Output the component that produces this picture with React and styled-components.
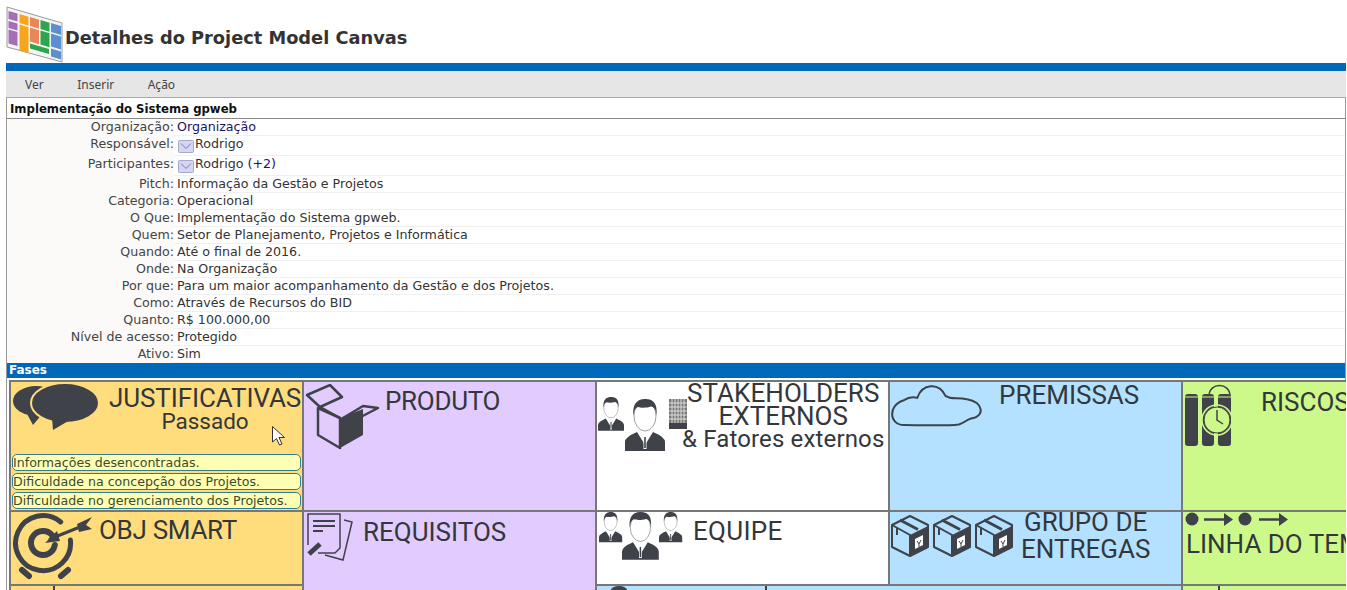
import React from 'react'
import styled, { createGlobalStyle } from 'styled-components'

const DARK = '#3f4349'

const GlobalStyle = createGlobalStyle`
  html, body {
    margin: 0;
    padding: 0;
    height: 590px;
    overflow: hidden;
    background: #fff;
    font-family: "DejaVu Sans", Verdana, sans-serif;
  }
`

const Page = styled.div`
  position: relative;
  width: 1340px;
  height: 590px;
  margin-left: 6px;
  overflow: hidden;
`

const Header = styled.header`
  display: flex;
  align-items: flex-start;
  height: 63px;
`

const PageTitle = styled.h1`
  margin: 26px 0 0 1px;
  font-size: 17.8px;
  line-height: 23px;
  font-weight: bold;
  color: #333;
`

const BlueBar = styled.div`
  height: 8px;
  background: #0068b8;
`

const Menu = styled.nav`
  display: flex;
  gap: 33.5px;
  height: 26px;
  padding-left: 19px;
  align-items: center;
  background: #e6e6e6;
  border-bottom: 1px solid #aaa;
  font-family: "Noto Sans", sans-serif;
  font-size: 12px;
  color: #444;
`

const Panel = styled.section`
  border-left: 1px solid #999;
  border-right: 1px solid #999;
  height: 493px;
  background: #fbfaf8;
`

const ProjectName = styled.div`
  height: 20px;
  padding-left: 3px;
  background: #fff;
  border-bottom: 1px solid #888;
  font-size: 11.7px;
  line-height: 22px;
  font-weight: bold;
  color: #111;
`

const Row = styled.div`
  display: grid;
  grid-template-columns: 167px 1fr;
  height: ${p => (p.$tall ? 20 : 17)}px;
  font-size: 12.65px;
  line-height: 16px;
  color: #333;
`

const Label = styled.div`
  text-align: right;
  color: #444;
`

const Value = styled.div`
  display: flex;
  align-items: flex-start;
  padding-left: 3px;
  background: #fff;
  border-bottom: 1px solid #f0f0f0;
  color: ${p => (p.$link ? '#1a1266' : '#333')};
`

const Muted = styled.span`
  color: #1a1266;
  margin-left: 4px;
`

const SectionBar = styled.div`
  height: 15px;
  padding-left: 2px;
  background: #0068b8;
  font-size: 12px;
  line-height: 15px;
  font-weight: bold;
  color: #fff;
`

const CanvasGrid = styled.div`
  display: grid;
  grid-template-columns: repeat(5, 291px);
  grid-template-rows: 128px 72px 60px;
  gap: 2px;
  width: max-content;
  margin: 2px 0 0 2px;
  padding: 2px;
  background: #777;
`

const Cell = styled.div`
  display: flex;
  flex-direction: column;
  overflow: hidden;
  background: ${p => p.$bg};
  grid-column: ${p => p.$col};
  grid-row: ${p => p.$row};
`

const Head = styled.div`
  display: flex;
  align-items: flex-start;
  padding: ${p => p.$top || 0}px 0 0 ${p => p.$left || 0}px;
`

const Icon = styled.svg`
  display: block;
  flex: none;
`

const Titles = styled.div`
  margin: ${p => p.$mt || 0}px 0 0 ${p => p.$ml || 0}px;
  text-align: ${p => p.$align || 'center'};
  white-space: nowrap;
  font-family: Roboto, "Noto Sans", sans-serif;
  color: #33373c;
`

const Title = styled.div`
  font-size: ${p => p.$size || 26}px;
  line-height: ${p => p.$lh || 26}px;
  letter-spacing: ${p => p.$ls || 0}px;
`

const Notes = styled.div`
  display: flex;
  flex-direction: column;
  gap: 2px;
  margin-top: auto;
  padding: 0 1px 1px;
`

const Note = styled.div`
  height: 15px;
  border: 1px solid #2f7f8c;
  border-radius: 5px;
  background: #ffffb4;
  font-size: 12.6px;
  line-height: 15px;
  color: #3c4a30;
  white-space: nowrap;
`

const Peek = styled.div`
  width: ${p => p.$w || 2}px;
  height: 8px;
  margin-left: ${p => p.$at}px;
  background: ${DARK};
  border-radius: ${p => (p.$w ? '50% 50% 0 0' : 0)};
`

const PeekRow = styled.div`
  display: flex;
  align-items: flex-start;
`

const Pointer = styled.svg`
  position: absolute;
  left: 265px;
  top: 425px;
`

const Logo = () => (
  <Icon width="58" height="58" viewBox="6 6 58 58" style={{ marginTop: 6 }}>
    <path d="M7 7 L62 23 V62 L7 47 Z" fill="#f4f4f4" stroke="#9a9aa2" strokeWidth="1" />
    <g transform="skewY(16)">
      <rect x="8.5" y="8.5" width="9" height="8" fill="#a56fb5" />
      <rect x="8.5" y="18.5" width="9" height="7" fill="#a56fb5" />
      <rect x="8.5" y="27" width="9" height="14" fill="#a56fb5" />
      <rect x="19.5" y="8.5" width="9" height="9" fill="#f7a51b" />
      <rect x="19.5" y="19" width="9" height="26" fill="#f7a51b" />
      <rect x="30" y="8.5" width="9" height="9" fill="#e8865a" />
      <rect x="30" y="19" width="9" height="14" fill="#e8865a" />
      <rect x="30" y="35" width="19" height="5" fill="#2da44e" />
      <rect x="40.5" y="8.5" width="9" height="9" fill="#2da44e" />
      <rect x="40.5" y="19" width="9" height="14" fill="#2da44e" />
      <rect x="51" y="8.5" width="10" height="9" fill="#5b8fd0" />
      <rect x="51" y="19" width="10" height="13" fill="#5b8fd0" />
      <rect x="51" y="34" width="10" height="8" fill="#5b8fd0" />
    </g>
  </Icon>
)

const Chevron = () => (
  <Icon width="16" height="13" viewBox="0 0 16 13" style={{ margin: '4px 1px 0 1px' }}>
    <rect x="0.5" y="0.5" width="15" height="12" rx="1" fill="#d5d7f2" stroke="#a5a7cc" />
    <path d="M3 3.5 L8 8.5 L13 3.5" fill="none" stroke="#777aa8" strokeWidth="1" />
  </Icon>
)

const Bubbles = ({ bg }) => (
  <Icon width="87" height="47" viewBox="13 383 87 47" style={{ marginTop: 1, marginLeft: 2 }}>
    <ellipse cx="36" cy="401" rx="23" ry="15" fill={DARK} />
    <path d="M26 412 L33 425 L44 412 Z" fill={DARK} />
    <ellipse cx="65" cy="403" rx="34" ry="20" fill={DARK} stroke={bg} strokeWidth="2" />
    <path d="M52 418 L53 430 L70 420 Z" fill={DARK} />
  </Icon>
)

const Target = () => (
  <Icon width="84" height="68" viewBox="11 512 84 68">
    <g fill="none" stroke={DARK} strokeLinecap="round">
      <path d="M60.7 522 A27.5 27.5 0 1 0 70.4 540" strokeWidth="5" />
      <path d="M52.2 535.3 A12 12 0 1 0 54.8 545" strokeWidth="6" />
      <path d="M22 570 L29 576 M68 570 L61 576" strokeWidth="6" />
      <path d="M50 539 L80 527" strokeWidth="3" />
    </g>
    <path d="M45 543 L57 531 L60 541 Z" fill={DARK} />
    <path d="M77 524 L92 517 L86 525 L92 529 L79 532 Z" fill={DARK} />
  </Icon>
)

const OpenBox = () => (
  <Icon width="75" height="66" viewBox="305 384 75 66">
    <g fill="none" stroke={DARK} strokeWidth="2.5" strokeLinejoin="round">
      <path d="M307 395 L330 385 L342 397 L320 407 Z" />
      <path d="M318 408 V435 L340 448 V418 Z" />
      <path d="M320 407 L340 418" />
      <path d="M343 418 L363 406 L378 408 L355 420" />
    </g>
    <path d="M340 418 L363 409 V435 L340 448 Z" fill={DARK} />
  </Icon>
)

const Papers = () => (
  <Icon width="50" height="50" viewBox="305 512 50 50">
    <g fill="none" stroke={DARK} strokeWidth="1.5">
      <path d="M308 545 V514 H340 V548 L335 553 H318" />
      <path d="M344 520 L352 522 L343 560 L325 555" />
      <path d="M313 521 H335 M313 526 H335" strokeWidth="2" />
      <path d="M313 531 H323" strokeWidth="2" />
    </g>
    <path d="M309 554 L320 544" stroke={DARK} strokeWidth="5" />
  </Icon>
)

// busto usado nos grupos de pessoas
const Person = ({ x, y, s }) => (
  <g transform={`translate(${x} ${y}) scale(${s})`}>
    <ellipse cx="20" cy="17" rx="11" ry="15" fill="#fff" stroke="#888" strokeWidth="0.8" />
    <path d="M8.5 17 C7 3 14 0 20 0 C27 0 33 3 31.5 17 C31 10 29 8 26 7.5 C22 9 16 9 13 8 C10 9 9 12 8.5 17 Z" fill={DARK} />
    <path d="M0 52 V43 Q0 38 12 33 L20 46 L28 33 Q40 38 40 43 V52 Z" fill={DARK} />
    <path d="M20 37 V50" stroke="#fff" strokeWidth="3" />
    <path d="M20 38 V49" stroke={DARK} strokeWidth="1.6" />
  </g>
)

const Stakeholders = () => (
  <Icon width="92" height="60" viewBox="597 395 92 60">
    <Person x={598} y={397} s={0.65} />
    <Person x={625} y={399} s={1} />
    <rect x="669" y="399" width="18" height="30" fill="#777" />
    <path d="M672 399 V423 M675 399 V423 M678 399 V423 M681 399 V423 M684 399 V423 M669 403 H687 M669 407 H687 M669 411 H687 M669 415 H687 M669 419 H687" stroke="#ddd" strokeWidth="1" />
    <rect x="669" y="423" width="18" height="6" fill={DARK} />
  </Icon>
)

const Team = () => (
  <Icon width="86" height="52" viewBox="598 512 86 52">
    <Person x={599} y={512} s={0.58} />
    <Person x={622} y={512} s={0.92} />
    <Person x={659} y={512} s={0.58} />
  </Icon>
)

const Cloud = () => (
  <Icon width="97" height="47" viewBox="18 21 292 140">
    <path
      d="M60 150 C15 150 10 90 60 75 C75 65 90 65 100 68 C115 25 165 20 185 62 C205 75 215 65 250 72 C300 80 305 125 262 130 C245 135 245 142 225 148 C190 153 100 150 60 150 Z"
      fill="none"
      stroke={DARK}
      strokeWidth="6"
    />
  </Icon>
)

const ParcelShape = () => (
  <>
    <path d="M19 1 L37 10 V32 L19 41 L1 32 V10 Z" fill="none" stroke={DARK} strokeWidth="2" strokeLinejoin="round" />
    <path d="M19 20 L37 11 V32 L19 41 Z" fill={DARK} />
    <path d="M1 10 L19 20 V41" fill="none" stroke={DARK} strokeWidth="2" />
    <path d="M9 5 L27 14.5" stroke={DARK} strokeWidth="3" />
    <path d="M6 13 V20" stroke={DARK} strokeWidth="2" />
    <path d="M24 24 L32 20 V30 L24 34 Z" fill="#fff" />
    <path d="M26 26 L28 29 L30 25 M28 29 V32" fill="none" stroke={DARK} strokeWidth="1" />
  </>
)

const Parcels = () => (
  <Icon width="122" height="42" viewBox="0 0 122 42">
    {[0, 42, 84].map(x => (
      <g key={x} transform={`translate(${x} 0)`}>
        <ParcelShape />
      </g>
    ))}
  </Icon>
)

const Bomb = ({ bg }) => (
  <Icon width="50" height="64" viewBox="1184 384 50 64">
    <path d="M1209 396 C1209 382 1230 382 1230 396" fill="none" stroke={DARK} strokeWidth="1.5" />
    <rect x="1185" y="394" width="13" height="52" rx="3" fill={DARK} />
    <rect x="1202" y="394" width="12" height="52" rx="3" fill={DARK} />
    <rect x="1218" y="394" width="13" height="52" rx="3" fill={DARK} />
    <path d="M1185 397 H1198 M1202 397 H1214 M1218 397 H1231" stroke={bg} strokeWidth="1" />
    <circle cx="1217" cy="420" r="13" fill={bg} stroke={DARK} strokeWidth="1" />
    <circle cx="1217" cy="420" r="15" fill="none" stroke={bg} strokeWidth="1.5" />
    <path d="M1217 410 V420 L1223 424" fill="none" stroke={DARK} strokeWidth="1.5" />
  </Icon>
)

const Timeline = () => (
  <Icon width="106" height="16" viewBox="1184 512 106 16">
    <circle cx="1192" cy="519" r="6.5" fill={DARK} />
    <circle cx="1245" cy="519" r="6.5" fill={DARK} />
    <path d="M1204 519.5 H1226 M1259 519.5 H1281" stroke={DARK} strokeWidth="2.5" />
    <path d="M1224 513 L1233 519.5 L1224 526 Z M1279 513 L1288 519.5 L1279 526 Z" fill={DARK} />
  </Icon>
)

const fields = [
  { label: 'Organização', value: 'Organização', link: true },
  { label: 'Responsável', value: 'Rodrigo', person: true },
  { label: 'Participantes', value: 'Rodrigo', more: '(+2)', person: true },
  { label: 'Pitch', value: 'Informação da Gestão e Projetos' },
  { label: 'Categoria', value: 'Operacional' },
  { label: 'O Que', value: 'Implementação do Sistema gpweb.' },
  { label: 'Quem', value: 'Setor de Planejamento, Projetos e Informática' },
  { label: 'Quando', value: 'Até o final de 2016.' },
  { label: 'Onde', value: 'Na Organização' },
  { label: 'Por que', value: 'Para um maior acompanhamento da Gestão e dos Projetos.' },
  { label: 'Como', value: 'Através de Recursos do BID' },
  { label: 'Quanto', value: 'R$ 100.000,00' },
  { label: 'Nível de acesso', value: 'Protegido' },
  { label: 'Ativo', value: 'Sim' },
]

const YELLOW = '#ffdd7d'
const PURPLE = '#e2ccff'
const BLUE = '#b3e1ff'
const GREEN = '#cdf98a'

const App = () => {
  return (
    <Page>
      <GlobalStyle />
      <Header>
        <Logo />
        <PageTitle>Detalhes do Project Model Canvas</PageTitle>
      </Header>
      <BlueBar />
      <Menu>
        <span>Ver</span>
        <span>Inserir</span>
        <span>Ação</span>
      </Menu>
      <Panel>
        <ProjectName>Implementação do Sistema gpweb</ProjectName>
        {fields.map(f => (
          <Row key={f.label} $tall={f.person}>
            <Label>{f.label}:</Label>
            <Value $link={f.link}>
              {f.person && <Chevron />}
              {f.value}
              {f.more && <Muted>{f.more}</Muted>}
            </Value>
          </Row>
        ))}
        <SectionBar>Fases</SectionBar>
        <CanvasGrid>
          <Cell $bg={YELLOW} $col="1" $row="1">
            <Head>
              <Bubbles bg={YELLOW} />
              <Titles $ml={9} $mt={3}>
                <Title $ls={-0.1}>JUSTIFICATIVAS</Title>
                <Title $size={22.5} $lh={20}>Passado</Title>
              </Titles>
            </Head>
            <Notes>
              <Note>Informações desencontradas.</Note>
              <Note>Dificuldade na concepção dos Projetos.</Note>
              <Note>Dificuldade no gerenciamento dos Projetos.</Note>
            </Notes>
          </Cell>
          <Cell $bg={PURPLE} $col="2" $row="1">
            <Head $left={1} $top={2}>
              <OpenBox />
              <Titles $ml={5} $mt={4}>
                <Title $ls={-0.3}>PRODUTO</Title>
              </Titles>
            </Head>
          </Cell>
          <Cell $bg="#fff" $col="3" $row="1">
            <Head $top={13}>
              <Stakeholders />
              <Titles $ml={-7} $mt={-13}>
                <Title $lh={23} $ls={0.05}>STAKEHOLDERS</Title>
                <Title $lh={23}>EXTERNOS</Title>
                <Title $size={24} $lh={23} $ls={0.15}>&amp; Fatores externos</Title>
              </Titles>
            </Head>
          </Cell>
          <Cell $bg={BLUE} $col="4" $row="1">
            <Head>
              <Cloud />
              <Titles $ml={12}>
                <Title>PREMISSAS</Title>
              </Titles>
            </Head>
          </Cell>
          <Cell $bg={GREEN} $col="5" $row="1">
            <Head $left={1} $top={2}>
              <Bomb bg={GREEN} />
              <Titles $ml={27} $mt={5}>
                <Title>RISCOS</Title>
              </Titles>
            </Head>
          </Cell>

          <Cell $bg={YELLOW} $col="1" $row="2">
            <Head>
              <Target />
              <Titles $ml={4} $mt={5}>
                <Title $ls={-0.3}>OBJ SMART</Title>
              </Titles>
            </Head>
          </Cell>
          <Cell $bg={PURPLE} $col="2" $row="2 / 4">
            <Head $left={1}>
              <Papers />
              <Titles $ml={8} $mt={7}>
                <Title>REQUISITOS</Title>
              </Titles>
            </Head>
          </Cell>
          <Cell $bg="#fff" $col="3" $row="2">
            <Head $left={1}>
              <Team />
              <Titles $ml={9} $mt={6}>
                <Title $ls={0.3}>EQUIPE</Title>
              </Titles>
            </Head>
          </Cell>
          <Cell $bg={BLUE} $col="4" $row="2">
            <Head $left={1} $top={3}>
              <Parcels />
              <Titles $ml={8} $mt={-6}>
                <Title $lh={27}>GRUPO DE</Title>
                <Title $lh={27}>ENTREGAS</Title>
              </Titles>
            </Head>
          </Cell>
          <Cell $bg={GREEN} $col="5" $row="2">
            <Head $left={1}>
              <Timeline />
            </Head>
            <Titles $ml={3} $mt={3} $align="left">
              <Title>LINHA DO TEMPO</Title>
            </Titles>
          </Cell>

          <Cell $bg={YELLOW} $col="1" $row="3">
            <PeekRow>
              <Peek $at={42} />
            </PeekRow>
          </Cell>
          <Cell $bg={BLUE} $col="3 / 5" $row="3">
            <PeekRow>
              <Peek $at={14} $w={16} />
              <Peek $at={138} />
            </PeekRow>
          </Cell>
          <Cell $bg={GREEN} $col="5" $row="3">
            <PeekRow>
              <Peek $at={35} />
            </PeekRow>
          </Cell>
        </CanvasGrid>
      </Panel>
      <Pointer width="16" height="22" viewBox="0 0 16 22">
        <path d="M1.5 1.5 V17 L5.5 13.5 L8.5 20 L11 19 L8 12.5 L13.5 12.5 Z" fill="#fff" stroke="#333" strokeWidth="1" />
      </Pointer>
    </Page>
  )
}

export default App
